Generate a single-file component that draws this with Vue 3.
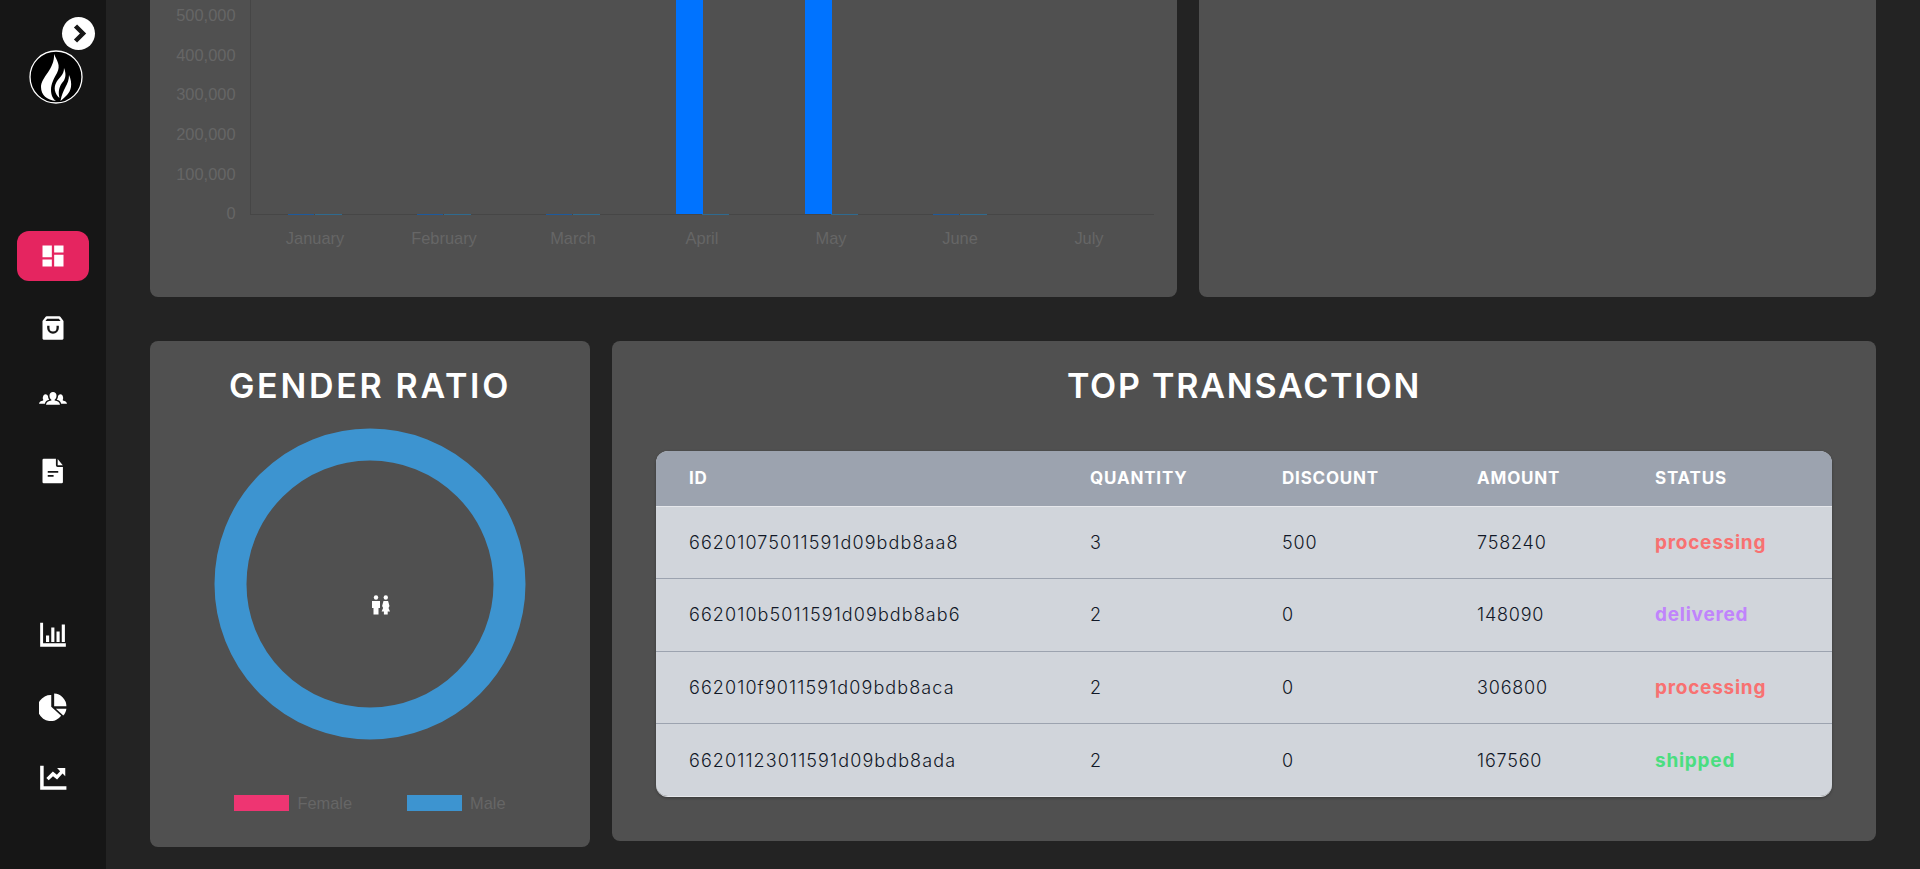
<template>
  <div class="layout">
    <aside class="sidebar">
      <button class="toggle">
        <svg viewBox="0 0 33 33" width="33" height="33"><path d="M13.500 9l7.500 7.500-7.500 7.500" fill="none" stroke="#161616" stroke-width="4.500" /></svg>
      </button>
      <svg class="logo" viewBox="0 0 56 56" width="56" height="56">
        <circle cx="28" cy="28" r="26" fill="#000" stroke="#fff" stroke-width="1.300" />
        <path d="M26 5C29 12 33 16 29 24 26 29 23 35 23 41 23 46 25 50 28 52 19 51 13 46 13 38 13 28 27 20 26 5Z" fill="#fff" />
        <path d="M36 19C39 26 37 31 34 34 31 38 30 43 31.500 49 27 45 25 39 28.500 33 31.500 28 36 26 36 19Z" fill="#fff" />
        <path d="M41 26C45 35 43 42 39 46 37 48 35 50 32.500 52 33.500 46 35.500 42 37.500 38 39.500 34 41 31 41 26Z" fill="#fff" />
      </svg>

      <nav class="nav-group">
        <a class="nav-item active">
          <svg viewBox="0 0 24 24" width="28" height="28"><path d="M13 21V11h8v10h-8zM3 13V3h8v10H3zm0 8v-6h8v6H3zM13 9V3h8v6h-8z" /></svg>
        </a>
        <a class="nav-item">
          <svg viewBox="0 0 24 24" width="28" height="28"><path d="M6.500 2h11a1 1 0 0 1 .8.4L21 6v15a1 1 0 0 1-1 1H4a1 1 0 0 1-1-1V6l2.700-3.600a1 1 0 0 1 .8-.4zm12 4L17 4H7L5.500 6h13zM9 10H7v2a5 5 0 0 0 10 0v-2h-2v2a3 3 0 0 1-6 0v-2z" /></svg>
        </a>
        <a class="nav-item">
          <svg viewBox="0 0 24 24" width="28" height="28"><path d="M12 6a3 3 0 0 1 3 3.200c0 1.500-.7 2.800-1.600 3.400v.7c2.500.4 4.400 1.300 4.600 3.700H6c.2-2.400 2.100-3.300 4.600-3.700v-.7C9.700 12 9 10.700 9 9.200A3 3 0 0 1 12 6zM5.500 8a2.300 2.300 0 0 1 2.200 1.500c0 1.200.4 2.300 1 3.100-2 .5-3.300 1.500-3.700 3.400H0c.2-1.700 1.600-2.500 3.600-2.800v-.7C2.900 12 3.300 8 5.500 8zM18.500 8c2.200 0 2.600 4 1.900 4.500v.7c2 .3 3.400 1.100 3.600 2.800h-5c-.4-1.900-1.700-2.900-3.700-3.400.6-.8 1-1.900 1-3.100A2.300 2.300 0 0 1 18.500 8z" /></svg>
        </a>
        <a class="nav-item">
          <svg viewBox="0 0 24 24" width="28" height="28"><path fill-rule="evenodd" d="M4 1.500h10.500V7a1.500 1.500 0 0 0 1.500 1.500h4.500v13a1 1 0 0 1-1 1H4a1 1 0 0 1-1-1v-19a1 1 0 0 1 1-1zM7.500 12v1.500h9V12h-9zm0 3.500V17h5v-1.500h-5z" /><path d="M16 1.800l4.400 5.200H16z" /></svg>
        </a>
      </nav>

      <nav class="nav-group lower">
        <a class="nav-item">
          <svg viewBox="0 0 24 24" width="28" height="28"><path d="M1 1.500h2.500v17.500H23v3H1zM6 12.500h2.700V18H6zM10.500 5.500h2.700V18h-2.700zM15 9h2.700v9H15zM19.500 3h2.700v15h-2.700z" /></svg>
        </a>
        <a class="nav-item">
          <svg viewBox="0 0 24 24" width="28" height="28"><path d="M10.500 1.700A11.200 11.200 0 1 0 19 19.600l-8.500-7.900zM13 .5a11 11 0 0 1 10.500 10.800H13zM14.500 13.500h9c-.3 2.500-1.300 4.300-2.700 5.800z" /></svg>
        </a>
        <a class="nav-item">
          <svg viewBox="0 0 24 24" width="28" height="28"><path d="M1 1.500h3v17.500h19.500v3H1zM22.500 3.500v7l-2.300-2.300-4.700 5-3.500-2.800-3.700 3.600-2-1.900 5.600-5.600 3.400 2.800 2.800-3-2.600-2.800z" /></svg>
        </a>
      </nav>
    </aside>

    <main class="content">
      <div class="row-top">
        <section class="card chart-card">
          <svg class="bar-chart" viewBox="0 0 1027 340" width="1027" height="340">
            <line x1="100.500" y1="0" x2="100.500" y2="258" class="axis" />
            <line x1="100" y1="257.500" x2="1004" y2="257.500" class="axis" />
            <text v-for="tick in yTicks" :key="tick.label" x="85.500" :y="tick.y" text-anchor="end" class="tick">{{ tick.label }}</text>
            <template v-for="(m, i) in months" :key="m.name">
              <rect v-if="m.first" :x="166 + i * 129 - 27" :y="257 - m.first" width="27" :height="m.first" fill="#0073ff" />
              <rect v-if="m.low" :x="165 + i * 129 - 27" y="257" width="26" height="1" fill="#1e5a9c" />
              <rect v-if="m.low || m.first" :x="165 + i * 129" y="257" width="27" height="1" fill="#2f6a8f" />
              <text :x="165 + i * 129" y="287" text-anchor="middle" class="tick">{{ m.name }}</text>
            </template>
          </svg>
        </section>
        <section class="card"></section>
      </div>

      <div class="row-bottom">
        <section class="card gender-card">
          <h2 class="card-title gender-title">GENDER RATIO</h2>
          <svg class="donut" viewBox="0 0 320 320" width="320" height="320">
            <circle cx="160" cy="160" r="139.500" fill="none" stroke="#3d94d0" stroke-width="32" />
            <g fill="#fff">
              <circle cx="166" cy="173.500" r="2.200" />
              <path d="M162 177h8v7h-1.500v6.500h-5V184H162z" />
              <circle cx="175.800" cy="173.500" r="2.200" />
              <path d="M173.500 177h4.600l1.400 5-1 2 1.500 3.500h-2.300v3h-3.800v-3H171.600l1.500-3.500-1-2z" />
            </g>
          </svg>
          <div class="legend">
            <div class="legend-item"><span class="swatch female"></span>Female</div>
            <div class="legend-item"><span class="swatch male"></span>Male</div>
          </div>
        </section>

        <section class="card table-card">
          <h2 class="card-title top-title">TOP TRANSACTION</h2>
          <div class="table-wrap">
            <table>
              <colgroup>
                <col class="col-id" /><col class="col-qty" /><col class="col-disc" /><col class="col-amt" /><col />
              </colgroup>
              <thead>
                <tr>
                  <th>ID</th><th>Quantity</th><th>Discount</th><th>Amount</th><th>Status</th>
                </tr>
              </thead>
              <tbody>
                <tr v-for="t in transactions" :key="t.id">
                  <td class="tx-id">{{ t.id }}</td>
                  <td>{{ t.quantity }}</td>
                  <td>{{ t.discount }}</td>
                  <td>{{ t.amount }}</td>
                  <td class="status" :class="t.status">{{ t.status }}</td>
                </tr>
              </tbody>
            </table>
          </div>
        </section>
      </div>
    </main>
  </div>
</template>

<script setup>
const yTicks = [
  { label: '500,000', y: 64 },
  { label: '400,000', y: 103.500 },
  { label: '300,000', y: 143 },
  { label: '200,000', y: 183 },
  { label: '100,000', y: 223 },
  { label: '0', y: 261.500 },
]

const months = [
  { name: 'January', low: true },
  { name: 'February', low: true },
  { name: 'March', low: true },
  { name: 'April', first: 257 },
  { name: 'May', first: 257 },
  { name: 'June', low: true },
  { name: 'July' },
]

const transactions = [
  { id: '66201075011591d09bdb8aa8', quantity: 3, discount: 500, amount: 758240, status: 'processing' },
  { id: '662010b5011591d09bdb8ab6', quantity: 2, discount: 0, amount: 148090, status: 'delivered' },
  { id: '662010f9011591d09bdb8aca', quantity: 2, discount: 0, amount: 306800, status: 'processing' },
  { id: '66201123011591d09bdb8ada', quantity: 2, discount: 0, amount: 167560, status: 'shipped' },
]
</script>

<style>
html, body {
  margin: 0;
  background: #232323;
  overflow: hidden;
}
</style>

<style scoped>
* {
  box-sizing: border-box;
  font-family: Inter, sans-serif;
}

.layout {
  display: flex;
  height: 100vh;
  background: #232323;
  overflow: hidden;
}

.sidebar {
  position: relative;
  width: 106px;
  flex-shrink: 0;
  background: #161616;
  display: flex;
  flex-direction: column;
  align-items: center;
  padding-top: 49px;
}

.toggle {
  position: absolute;
  top: 17px;
  left: 62px;
  width: 33px;
  height: 33px;
  border: none;
  border-radius: 50%;
  background: #fff;
  padding: 0;
  display: flex;
  align-items: center;
  justify-content: center;
}

.logo {
  margin-left: 5px;
}

.nav-group {
  display: flex;
  flex-direction: column;
  gap: 21.500px;
  margin-top: 126px;
}

.nav-group.lower {
  margin-top: 114.500px;
}

.nav-item {
  width: 72px;
  height: 50px;
  border-radius: 12px;
  display: flex;
  align-items: center;
  justify-content: center;
}

.nav-item svg {
  fill: #fff;
}

.nav-item.active {
  background: #e52560;
}

.content {
  flex: 1;
  min-width: 0;
  height: 100%;
  display: flex;
  flex-direction: column;
  justify-content: flex-end;
  gap: 44px;
  padding: 0 44px 22px;
}

.row-top {
  display: flex;
  gap: 22px;
  flex-shrink: 0;
}

.row-bottom {
  display: flex;
  gap: 22px;
  align-items: flex-start;
  flex-shrink: 0;
}

.card {
  flex: 1;
  background: #505050;
  border-radius: 8px;
}

.chart-card {
  flex: 0 0 1027px;
  height: 340px;
}

.bar-chart {
  display: block;
}

.axis {
  stroke: #464646;
  stroke-width: 1;
}

.tick {
  font-family: "Liberation Sans", sans-serif;
  font-size: 16.400px;
  fill: #666;
}

.card-title {
  margin: 0;
  height: 40px;
  line-height: 40px;
  font-size: 34px;
  font-weight: 600;
  color: #fff;
  text-align: center;
}

.gender-title {
  letter-spacing: 2.700px;
}

.top-title {
  letter-spacing: 1.800px;
}

.gender-card {
  flex: 0 0 440px;
  height: 506px;
  padding-top: 25px;
  display: flex;
  flex-direction: column;
  align-items: center;
}

.donut {
  display: block;
  margin-top: 18px;
}

.legend {
  display: flex;
  gap: 55px;
  margin-top: 51px;
  color: #666;
}

.legend-item {
  display: flex;
  align-items: center;
  gap: 8px;
  font-family: "Liberation Sans", sans-serif;
  font-size: 16.400px;
  line-height: 16px;
}

.swatch {
  width: 55px;
  height: 16px;
}

.swatch.female {
  background: #ee3572;
}

.swatch.male {
  background: #3d94d0;
}

.table-card {
  height: 500px;
  padding: 25px 44px 0;
}

.table-wrap {
  margin-top: 45px;
  border-radius: 12px;
  overflow: hidden;
  box-shadow: 0 1px 3px rgba(0, 0, 0, 0.3);
  border-bottom: 1px solid #e5e7eb;
}

table {
  width: 100%;
  table-layout: fixed;
  border-collapse: collapse;
  background: #d1d5db;
  color: #111827;
  font-size: 18px;
}

.col-id { width: 401px; }
.col-qty { width: 192px; }
.col-disc { width: 195px; }
.col-amt { width: 178px; }

th {
  height: 55px;
  padding: 0 33px;
  background: #9ca3af;
  color: #fff;
  font-size: 17px;
  font-weight: 700;
  letter-spacing: 0.800px;
  text-align: left;
  text-transform: uppercase;
  border-bottom: 1px solid #e5e7eb;
}

td {
  height: 72.500px;
  padding: 0 33px;
  font-weight: 300;
  letter-spacing: 0.800px;
  border-bottom: 1px solid #9ca3af;
}

td.tx-id {
  letter-spacing: 1.100px;
}

tbody tr:last-child td {
  border-bottom: none;
}

td.status {
  font-size: 19px;
  font-weight: 700;
  letter-spacing: 0.750px;
}

.status.processing { color: #f87171; }
.status.delivered { color: #c084fc; }
.status.shipped { color: #4ade80; }
</style>
